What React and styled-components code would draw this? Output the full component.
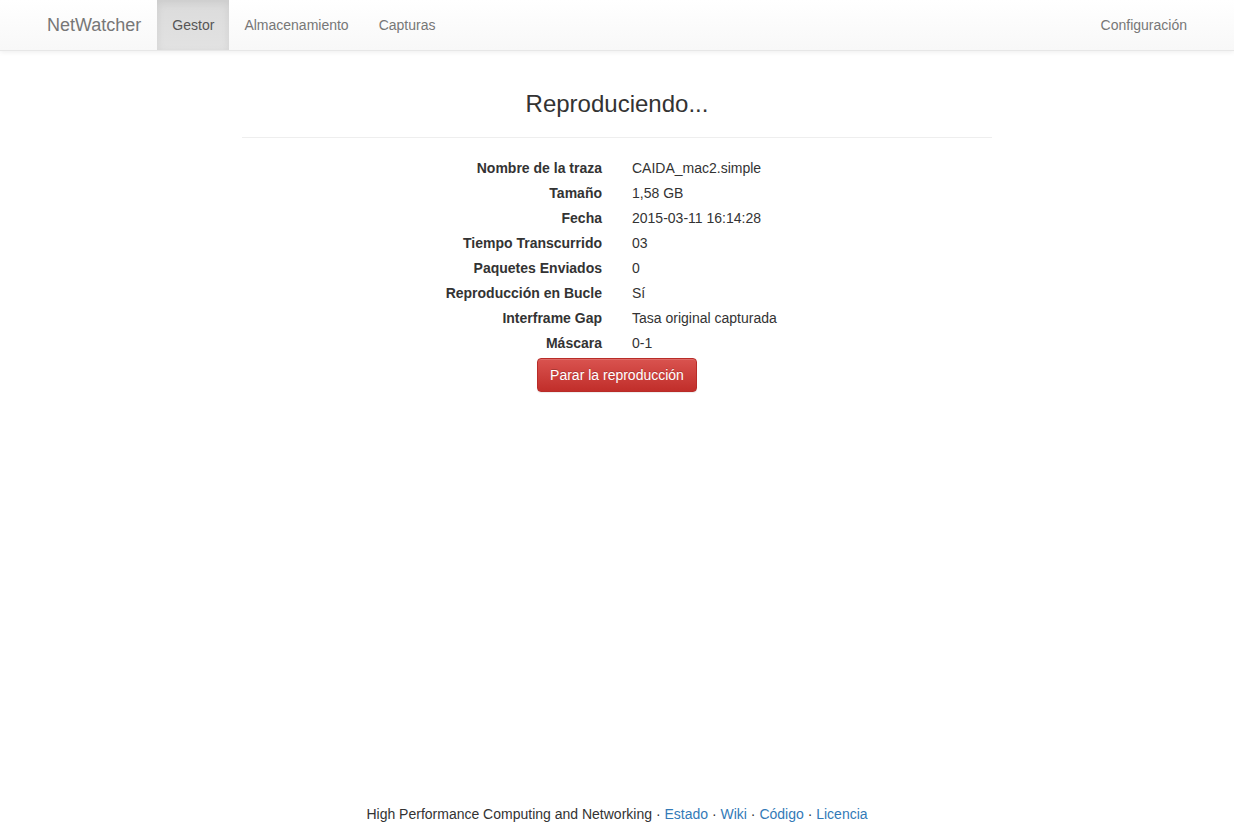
import React from 'react'
import styled, { createGlobalStyle } from 'styled-components'

const GlobalStyle = createGlobalStyle`
  * { box-sizing: border-box; }
  html, body { margin: 0; padding: 0; }
  body {
    font-family: "Liberation Sans", Arial, sans-serif;
    font-size: 14px;
    line-height: 20px;
    color: #333;
    background: #fff;
  }
`

const Page = styled.div`
  display: flex;
  flex-direction: column;
  min-height: 100vh;
`

const Navbar = styled.nav`
  height: 51px;
  background-image: linear-gradient(to bottom, #fff 0, #f8f8f8 100%);
  border-bottom: 1px solid #e7e7e7;
  box-shadow: inset 0 1px 0 rgba(255, 255, 255, .15), 0 1px 5px rgba(0, 0, 0, .075);
`

const NavContainer = styled.div`
  width: 1170px;
  margin: 0 auto;
  display: flex;
  justify-content: space-between;
`

const NavGroup = styled.ul`
  display: flex;
  list-style: none;
  margin: 0;
  padding: 0;
`

const Brand = styled.a`
  display: block;
  padding: 15px 16px 15px 15px;
  height: 50px;
  font-size: 18px;
  line-height: 20px;
  color: #777;
  text-decoration: none;
`

const NavLink = styled.a`
  display: block;
  padding: 15px;
  height: 50px;
  line-height: 20px;
  color: ${p => (p.$active ? '#555' : '#777')};
  text-decoration: none;
  background-image: ${p => (p.$active ? 'linear-gradient(to bottom, #dbdbdb 0, #e2e2e2 100%)' : 'none')};
  box-shadow: ${p => (p.$active ? 'inset 0 3px 9px rgba(0, 0, 0, .075)' : 'none')};
`

const Main = styled.main`
  flex: 1;
  width: 750px;
  margin: 0 auto;
`

const Header = styled.div`
  padding: 40px 0 20px;
  border-bottom: 1px solid #eee;
  text-align: center;
`

const Title = styled.h3`
  margin: 0;
  font-size: 24px;
  line-height: 26px;
  font-weight: 500;
  color: #333;
`

const InfoGrid = styled.dl`
  display: grid;
  grid-template-columns: 1fr 1fr;
  column-gap: 30px;
  row-gap: 5px;
  margin: 20px 0 0;
`

const Label = styled.dt`
  text-align: right;
  font-weight: bold;
`

const Value = styled.dd`
  margin: 0;
`

const Actions = styled.div`
  margin-top: 5px;
  text-align: center;
`

const DangerButton = styled.button`
  font-family: inherit;
  font-size: 14px;
  line-height: 20px;
  padding: 6px 12px;
  color: #fff;
  border: 1px solid #b92c28;
  border-radius: 4px;
  background-image: linear-gradient(to bottom, #d9534f 0, #c12e2a 100%);
  text-shadow: 0 -1px 0 rgba(0, 0, 0, .2);
  box-shadow: inset 0 1px 0 rgba(255, 255, 255, .15), 0 1px 1px rgba(0, 0, 0, .075);
  cursor: pointer;
`

const Footer = styled.footer`
  text-align: center;
  padding-bottom: 10px;
  color: #333;
`

const FooterLink = styled.a`
  color: #337ab7;
  text-decoration: none;
`

const rows = [
  ['Nombre de la traza', 'CAIDA_mac2.simple'],
  ['Tamaño', '1,58 GB'],
  ['Fecha', '2015-03-11 16:14:28'],
  ['Tiempo Transcurrido', '03'],
  ['Paquetes Enviados', '0'],
  ['Reproducción en Bucle', 'Sí'],
  ['Interframe Gap', 'Tasa original capturada'],
  ['Máscara', '0-1'],
]

const links = ['Estado', 'Wiki', 'Código', 'Licencia']

export default function App() {
  return (
    <Page>
      <GlobalStyle />
      <Navbar>
        <NavContainer>
          <NavGroup>
            <li><Brand href="#">NetWatcher</Brand></li>
            <li><NavLink href="#" $active>Gestor</NavLink></li>
            <li><NavLink href="#">Almacenamiento</NavLink></li>
            <li><NavLink href="#">Capturas</NavLink></li>
          </NavGroup>
          <NavGroup>
            <li><NavLink href="#">Configuración</NavLink></li>
          </NavGroup>
        </NavContainer>
      </Navbar>
      <Main>
        <Header>
          <Title>Reproduciendo...</Title>
        </Header>
        <InfoGrid>
          {rows.map(([k, v]) => (
            <React.Fragment key={k}>
              <Label>{k}</Label>
              <Value>{v}</Value>
            </React.Fragment>
          ))}
        </InfoGrid>
        <Actions>
          <DangerButton>Parar la reproducción</DangerButton>
        </Actions>
      </Main>
      <Footer>
        High Performance Computing and Networking
        {links.map(l => (
          <React.Fragment key={l}>
            {' · '}
            <FooterLink href="#">{l}</FooterLink>
          </React.Fragment>
        ))}
      </Footer>
    </Page>
  )
}
